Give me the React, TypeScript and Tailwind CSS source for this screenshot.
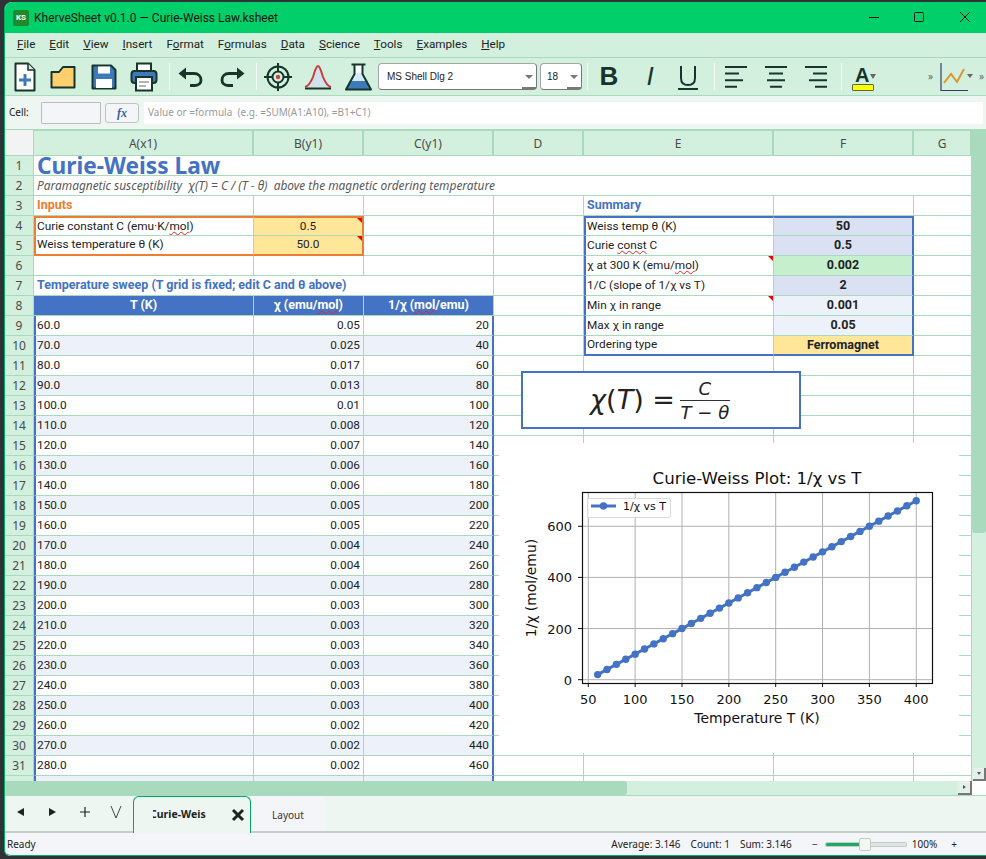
import type { ReactNode } from "react";
import { twMerge } from "tailwind-merge";

const A = "w-[220px]";
const B = "w-[110px]";
const C = "w-[130px]";
const D = "w-[90px]";
const E = "w-[190px]";
const F = "w-[140px]";
const G = "w-[58px]";

const ink = "#16352b";
const blue = "#4472c4";

const chi = [".05", ".025", ".017", ".013", ".01", ".008", ".007", ".006", ".006", ".005", ".005", ".004", ".004", ".004", ".003", ".003", ".003", ".003", ".003", ".003", ".002", ".002", ".002"];

function Cell({ className, children, mark }: { className?: string; children?: ReactNode; mark?: boolean }) {
  return (
    <div
      className={twMerge(
        "relative flex h-full shrink-0 items-center overflow-hidden whitespace-pre border-r border-b border-[#a9dabd] px-[3px] font-['Roboto',sans-serif] text-[11.8px] text-[#222]",
        className
      )}
    >
      <span>{children}</span>
      {mark && <span className="absolute top-0 right-0 h-0 w-0 border-t-[5px] border-l-[5px] border-t-[#f00000] border-l-transparent" />}
    </div>
  );
}

function Row({ n, children }: { n: number | string; children: ReactNode }) {
  return (
    <div className="flex h-[20px] w-[967px]">
      <div className="flex h-full w-[29px] shrink-0 items-center justify-center border-r border-b border-[#a9dabd] bg-[#d3f0df] text-[12px] text-[#4a4a4a]">
        {n}
      </div>
      {children}
    </div>
  );
}

function Wavy({ children }: { children: ReactNode }) {
  return <span className="underline decoration-[#e8202a] decoration-wavy decoration-[1px] underline-offset-[1px]">{children}</span>;
}

function Rest() {
  return (
    <>
      <Cell className={D} />
      <Cell className={E} />
      <Cell className={F} />
      <Cell className={G} />
    </>
  );
}

function SumRow({ n, label, value, fill, mark, left, last }: { n: number; label: ReactNode; value: string; fill: string; mark?: boolean; left: ReactNode; last?: boolean }) {
  return (
    <Row n={n}>
      {left}
      <Cell className={D} />
      <Cell className={twMerge(E, "border-l-2 border-l-[#4472c4] pl-[1px]", n === 4 && "border-t-2 border-t-[#4472c4]", last && "border-b-2 border-b-[#4472c4]")} mark={mark}>
        {label}
      </Cell>
      <Cell className={twMerge(F, fill, "justify-center border-r-2 border-r-[#4472c4] text-[12.5px] font-bold", n === 4 && "border-t-2 border-t-[#4472c4]", last && "border-b-2 border-b-[#4472c4]")}>
        {value}
      </Cell>
      <Cell className={G} />
    </Row>
  );
}

function ToolSep({ className }: { className: string }) {
  return <div className={twMerge("h-[27px] w-[1px] shrink-0 bg-[#f4faf6]", className)} />;
}

function AlignIcon({ className, lines }: { className: string; lines: number[][] }) {
  return (
    <svg viewBox="0 0 22 24" className={twMerge("h-[24px] w-[22px] shrink-0", className)}>
      {lines.map((l, i) => (
        <line key={i} x1={l[0]} x2={l[1]} y1={2 + i * 6.6} y2={2 + i * 6.6} stroke={ink} strokeWidth="2" />
      ))}
    </svg>
  );
}

function Combo({ className, text }: { className: string; text: string }) {
  return (
    <div className={twMerge("relative flex h-[27px] shrink-0 items-center rounded-[4px] border border-[#a5a5a5] border-r-[#777] border-b-[#777] bg-white pl-[8px] font-['Liberation_Sans',sans-serif] text-[10px] text-[#222]", className)}>
      {text}
      <span className="absolute top-[11px] right-[3px] h-0 w-0 border-t-[4px] border-r-[4px] border-l-[4px] border-t-[#777] border-r-transparent border-l-transparent" />
      <span className="absolute right-0 bottom-0 h-[2px] w-[14px] bg-[#777]" />
    </div>
  );
}

function Toolbar() {
  return (
    <div className="flex h-[39px] shrink-0 items-center overflow-hidden border-t border-b border-[#a9dabd] bg-[#d3f0df]">
      <svg viewBox="0 0 22 30" className="ml-[9px] h-[30px] w-[22px] shrink-0">
        <path d="M1.5 1.5 H14 L20.5 8 V28.5 H1.5 Z" fill="#fff" stroke={ink} strokeWidth="2" strokeLinejoin="round" />
        <path d="M14 1.5 V8 H20.5" fill="#dfe9e4" stroke={ink} strokeWidth="1.5" />
        <path d="M11 12 V24 M5 18 H17" stroke="#3f7ab8" strokeWidth="3" />
      </svg>
      <svg viewBox="0 0 26 24" className="ml-[14px] h-[24px] w-[26px] shrink-0">
        <path d="M1.5 7 L9 7 L13 2 H24.5 V22.5 H1.5 Z" fill="#fdcf6e" stroke={ink} strokeWidth="2" strokeLinejoin="round" />
      </svg>
      <svg viewBox="0 0 26 26" className="ml-[15px] h-[26px] w-[26px] shrink-0">
        <path d="M1.5 1.5 H20 L24.5 6 V24.5 H1.5 Z" fill="#3f7ab8" stroke={ink} strokeWidth="2" strokeLinejoin="round" />
        <rect x="7" y="2.5" width="12" height="7" fill="#fff" />
        <rect x="5" y="15" width="16" height="9" fill="#fff" />
      </svg>
      <svg viewBox="0 0 28 30" className="ml-[13px] h-[30px] w-[28px] shrink-0">
        <rect x="7" y="1.5" width="14" height="9" fill="#fff" stroke={ink} strokeWidth="2" />
        <rect x="1.5" y="9" width="25" height="12" rx="3" fill="#3f7ab8" stroke={ink} strokeWidth="2" />
        <rect x="6" y="15" width="16" height="13.5" fill="#fff" stroke={ink} strokeWidth="2" />
        <path d="M9 20 H19 M9 24 H16" stroke="#999" strokeWidth="1.5" />
      </svg>
      <ToolSep className="ml-[11px]" />
      <svg viewBox="0 0 25 20" className="ml-[8px] h-[20px] w-[25px] shrink-0">
        <path d="M2.5 6.5 H16 C20.5 6.5 23 9.5 23 13 C23 16 21 18.5 17 18.5 H12" fill="none" stroke={ink} strokeWidth="2.8" />
        <path d="M0.5 6.5 L8 0.5 V12.5 Z" fill={ink} />
      </svg>
      <svg viewBox="0 0 25 20" className="ml-[17px] h-[20px] w-[25px] shrink-0">
        <path d="M22.5 6.5 H9 C4.5 6.5 2 9.5 2 13 C2 16 4 18.5 8 18.5 H13" fill="none" stroke={ink} strokeWidth="2.8" />
        <path d="M24.5 6.5 L17 0.5 V12.5 Z" fill={ink} />
      </svg>
      <ToolSep className="ml-[11px]" />
      <svg viewBox="0 0 28 28" className="ml-[7px] h-[28px] w-[28px] shrink-0">
        <g fill="none" stroke={ink} strokeWidth="2">
          <circle cx="14" cy="14" r="10.5" />
          <circle cx="14" cy="14" r="5.5" />
          <path d="M14 0 V8 M14 20 V28 M0 14 H8 M20 14 H28" />
        </g>
        <circle cx="14" cy="14" r="2.2" fill="#d63c3c" />
      </svg>
      <svg viewBox="0 0 28 26" className="ml-[12px] h-[26px] w-[28px] shrink-0">
        <path d="M1 23 C5 22 7 18 9 13 C11 7 12 2 14 2 C16 2 17 7 19 13 C21 18 23 22 27 23 Z" fill="#cfe3ee" />
        <path d="M1 23 C5 22 7 18 9 13 C11 7 12 2 14 2 C16 2 17 7 19 13 C21 18 23 22 27 23" fill="none" stroke="#cc3b3b" strokeWidth="2" />
        <path d="M1 24.5 H27" stroke={ink} strokeWidth="2" />
      </svg>
      <svg viewBox="0 0 29 28" className="ml-[12px] h-[28px] w-[29px] shrink-0">
        <path d="M10.5 2 V11 L2 26.5 H27 L18.5 11 V2" fill="#d6e9f8" />
        <path d="M6 18 H23 L27 26.5 H2 Z" fill="#3f7ab8" />
        <rect x="11" y="2" width="7" height="8" fill="#fff" />
        <path d="M7.5 1.5 H21.5 M10.5 1.5 V11 L2 26.5 H27 L18.5 11 V1.5" fill="none" stroke={ink} strokeWidth="2" strokeLinejoin="round" />
      </svg>
      <Combo className="ml-[5px] w-[159px]" text="MS Shell Dlg 2" />
      <Combo className="ml-[3px] w-[42px] pl-[6px]" text="18" />
      <ToolSep className="ml-[5px]" />
      <span className="ml-[8px] flex h-[30px] w-[26px] shrink-0 items-center justify-center font-['Liberation_Sans',sans-serif] text-[26px] font-bold text-[#16352b]">B</span>
      <span className="ml-[15px] flex h-[30px] w-[26px] shrink-0 items-center justify-center font-['Liberation_Sans',sans-serif] text-[26px] text-[#16352b] italic">I</span>
      <svg viewBox="0 0 26 26" className="ml-[12px] h-[26px] w-[26px] shrink-0">
        <path d="M6 2 V14 C6 19 9 21 13 21 C17 21 20 19 20 14 V2" fill="none" stroke={ink} strokeWidth="2" />
        <path d="M3 25 H23" stroke={ink} strokeWidth="2" />
      </svg>
      <ToolSep className="ml-[13px]" />
      <AlignIcon className="ml-[10px]" lines={[[0, 22], [0, 14], [0, 18], [0, 12]]} />
      <AlignIcon className="ml-[18px]" lines={[[0, 22], [4, 18], [2, 20], [5, 17]]} />
      <AlignIcon className="ml-[18px]" lines={[[0, 22], [8, 22], [4, 22], [10, 22]]} />
      <ToolSep className="ml-[14px]" />
      <div className="relative ml-[10px] h-[30px] w-[28px] shrink-0">
        <span className="absolute top-[-2px] left-[3px] font-['Liberation_Sans',sans-serif] text-[20px] font-bold text-[#16352b]">A</span>
        <span className="absolute top-[12px] left-[18px] h-0 w-0 border-t-[5px] border-r-[3px] border-l-[3px] border-t-[#666] border-r-transparent border-l-transparent" />
        <span className="absolute top-[22px] left-0 h-[7px] w-[22px] rounded-[1px] border border-[#5d6b3c] bg-[#ffff00]" />
      </div>
      <span className="ml-[48px] w-[8px] shrink-0 text-[10px] text-[#666]">»</span>
      <svg viewBox="0 0 36 30" className="ml-[4px] h-[30px] w-[36px] shrink-0">
        <path d="M1 1 V28.5 H28" fill="none" stroke="#3a3a66" strokeWidth="1.2" />
        <path d="M4 21 L11 12 L17 20 L24 7" fill="none" stroke="#d9982b" strokeWidth="2" />
        <path d="M27 12 H33 L30 16 Z" fill="#666" />
      </svg>
      <span className="ml-[3px] w-[8px] shrink-0 text-[10px] text-[#666]">»</span>
    </div>
  );
}

function Chart() {
  const px = (v: number) => 588.3 + 0.937 * (v - 50);
  const py = (v: number) => 679.7 - 0.2557 * v;
  const pts = Array.from({ length: 35 }, (_, i) => 60 + i * 10);
  const xt = [50, 100, 150, 200, 250, 300, 350, 400];
  const yt = [0, 200, 400, 600];
  return (
    <svg viewBox="499 443 460 310" className="absolute top-[313px] left-[494px] h-[310px] w-[460px] bg-white font-['DejaVu_Sans',sans-serif]">
      <text x="757" y="484" textAnchor="middle" fontSize="16.6" fill="#111">Curie-Weiss Plot: 1/χ vs T</text>
      {xt.map((v) => (
        <g key={v}>
          <line x1={px(v)} x2={px(v)} y1="492" y2="683" stroke="#b0b0b0" />
          <line x1={px(v)} x2={px(v)} y1="683" y2="687" stroke="#111" />
          <text x={px(v)} y="704" textAnchor="middle" fontSize="13" fill="#111">{v}</text>
        </g>
      ))}
      {yt.map((v) => (
        <g key={v}>
          <line x1="582" x2="932" y1={py(v)} y2={py(v)} stroke="#b0b0b0" />
          <line x1="578" x2="582" y1={py(v)} y2={py(v)} stroke="#111" />
          <text x="572" y={py(v) + 5} textAnchor="end" fontSize="13" fill="#111">{v}</text>
        </g>
      ))}
      <polyline points={pts.map((t) => `${px(t)},${py((t - 50) * 2)}`).join(" ")} fill="none" stroke={blue} strokeWidth="3" />
      {pts.map((t) => (
        <circle key={t} cx={px(t)} cy={py((t - 50) * 2)} r="3.7" fill={blue} />
      ))}
      <rect x="582.5" y="492.5" width="350" height="191" fill="none" stroke="#111" strokeWidth="1.2" />
      <rect x="587.5" y="498.5" width="83" height="19" rx="2" fill="#fff" fillOpacity="0.85" stroke="#d8d8d8" />
      <line x1="591" x2="616" y1="506" y2="506" stroke={blue} strokeWidth="3" />
      <circle cx="603.5" cy="506" r="3.7" fill={blue} />
      <text x="623" y="510" fontSize="11" fill="#111">1/χ vs T</text>
      <text x="757" y="723" textAnchor="middle" fontSize="13.9" fill="#111">Temperature T (K)</text>
      <text x="536" y="588" textAnchor="middle" fontSize="13.9" fill="#111" transform="rotate(-90 536 588)">1/χ (mol/emu)</text>
    </svg>
  );
}

function Formula() {
  return (
    <div className="absolute top-[241px] left-[516px] flex h-[58px] w-[280px] items-center justify-center whitespace-nowrap border-2 border-[#4472c4] bg-white pr-[2px] font-['DejaVu_Sans',sans-serif] text-[#222]">
      <span className="text-[27px]">
        <i>χ</i>(<i>T</i>) =
      </span>
      <span className="ml-[5px] flex w-[50px] flex-col items-center text-[18px] leading-[23px] italic">
        <span className="w-full border-b border-[#333] text-center">C</span>
        <span>T − θ</span>
      </span>
    </div>
  );
}

function Grid() {
  const blankLeft = (
    <>
      <Cell className={A} />
      <Cell className={B} />
      <Cell className={C} />
    </>
  );
  return (
    <div className="relative h-[651px] w-[967px] shrink-0 overflow-hidden bg-white">
      <div className="flex h-[26px] w-[967px]">
        <div className="h-full w-[29px] shrink-0 border-r border-b border-[#a9dabd] bg-[#f1f4f2]" />
        {[["A(x1)", A], ["B(y1)", B], ["C(y1)", C], ["D", D], ["E", E], ["F", F], ["G", G]].map(([t, w]) => (
          <div key={t} className={twMerge(w, "flex h-full shrink-0 items-center justify-center border-t border-r-2 border-b border-[#a9dabd] bg-[#d3f0df] pt-[1px] text-[12px] text-[#4a4a4a]")}>
            {t}
          </div>
        ))}
      </div>

      <Row n={1}>
        <Cell className="w-[938px] pt-[1px] font-['Noto_Sans',sans-serif] text-[22.7px] leading-[20px] font-bold text-[#4472c4]">Curie-Weiss Law</Cell>
      </Row>
      <Row n={2}>
        <Cell className="w-[938px] font-['Noto_Sans',sans-serif] text-[11.9px] text-[#595959] italic">{"Paramagnetic susceptibility  χ(T) = C / (T − θ)  above the magnetic ordering temperature"}</Cell>
      </Row>
      <Row n={3}>
        <Cell className={twMerge(A, "text-[12.5px] font-bold text-[#ed7d31]")}>Inputs</Cell>
        <Cell className={B} />
        <Cell className={C} />
        <Cell className={D} />
        <Cell className={twMerge(E, "text-[12.5px] font-bold text-[#4472c4]")}>Summary</Cell>
        <Cell className={F} />
        <Cell className={G} />
      </Row>
      <SumRow
        n={4}
        label="Weiss temp θ (K)"
        value="50"
        fill="bg-[#dae1f2]"
        left={
          <>
            <Cell className={twMerge(A, "border-t-2 border-l-2 border-t-[#ed7d31] border-l-[#ed7d31] pl-[1px]")}>
              Curie constant C (emu·K/<Wavy>mol</Wavy>)
            </Cell>
            <Cell className={twMerge(B, "justify-center border-t-2 border-r-2 border-t-[#ed7d31] border-r-[#ed7d31] bg-[#ffe699]")} mark>
              0.5
            </Cell>
            <Cell className={C} />
          </>
        }
      />
      <SumRow
        n={5}
        label={
          <>
            Curie <Wavy>const</Wavy> C
          </>
        }
        value="0.5"
        fill="bg-[#dae1f2]"
        left={
          <>
            <Cell className={twMerge(A, "border-b-2 border-l-2 border-b-[#ed7d31] border-l-[#ed7d31] pl-[1px]")}>Weiss temperature θ (K)</Cell>
            <Cell className={twMerge(B, "justify-center border-r-2 border-b-2 border-r-[#ed7d31] border-b-[#ed7d31] bg-[#ffe699]")} mark>
              50.0
            </Cell>
            <Cell className={C} />
          </>
        }
      />
      <SumRow
        n={6}
        label={
          <>
            χ at 300 K (emu/<Wavy>mol</Wavy>)
          </>
        }
        value="0.002"
        fill="bg-[#c6efce]"
        mark
        left={blankLeft}
      />
      <SumRow
        n={7}
        label="1/C (slope of 1/χ vs T)"
        value="2"
        fill="bg-[#dae1f2]"
        left={
          <>
            <Cell className="w-[330px] border-r-0 text-[12.5px] font-bold text-[#4472c4]">Temperature sweep (T grid is fixed; edit C and θ above)</Cell>
            <Cell className={C} />
          </>
        }
      />
      <SumRow
        n={8}
        label="Min χ in range"
        value="0.001"
        fill="bg-[#edf2fa]"
        mark
        left={
          <>
            <Cell className={twMerge(A, "justify-center bg-[#4472c4] text-[12.5px] font-bold text-white")}>T (K)</Cell>
            <Cell className={twMerge(B, "justify-center bg-[#4472c4] text-[12.5px] font-bold text-white")}>
              χ (emu/<Wavy>mol</Wavy>)
            </Cell>
            <Cell className={twMerge(C, "justify-center bg-[#4472c4] text-[12.5px] font-bold text-white")}>
              1/χ (<Wavy>mol</Wavy>/emu)
            </Cell>
          </>
        }
      />
      {chi.map((v, i) => {
        const n = 9 + i;
        const t = 60 + i * 10;
        const shade = n % 2 === 0 ? "bg-[#edf2fa]" : "bg-white";
        const left = (
          <>
            <Cell className={twMerge(A, shade, "border-l-2 border-l-[#4472c4] pl-[1px]")}>{t}.0</Cell>
            <Cell className={twMerge(B, shade, "justify-end")}>{`0${v}`}</Cell>
            <Cell className={twMerge(C, shade, "justify-end border-r-2 border-r-[#4472c4]")}>{(t - 50) * 2}</Cell>
          </>
        );
        if (n === 9) return <SumRow key={n} n={n} label="Max χ in range" value="0.05" fill="bg-[#edf2fa]" left={left} />;
        if (n === 10) return <SumRow key={n} n={n} label="Ordering type" value="Ferromagnet" fill="bg-[#ffe699]" left={left} last />;
        return (
          <Row key={n} n={n}>
            {left}
            <Rest />
          </Row>
        );
      })}
      <Row n="">
        <Cell className={twMerge(A, "border-l-2 border-l-[#4472c4] bg-[#edf2fa]")} />
        <Cell className={twMerge(B, "bg-[#edf2fa]")} />
        <Cell className={twMerge(C, "border-r-2 border-r-[#4472c4] bg-[#edf2fa]")} />
        <Rest />
      </Row>

      <Formula />
      <Chart />
    </div>
  );
}

function VScroll() {
  return (
    <div className="relative flex h-[651px] w-[14px] shrink-0 flex-col bg-[#d3f0df]">
      <div className="h-[403px] rounded-b-[3px] bg-[#a9dabd]" />
      <div className="absolute right-0 bottom-0 flex h-[13px] w-[13px] items-center justify-center border-r-2 border-b-2 border-[#777] bg-[#e4f0ea]">
        <span className="h-0 w-0 border-t-[3px] border-r-[2.5px] border-l-[2.5px] border-t-[#555] border-r-transparent border-l-transparent" />
      </div>
    </div>
  );
}

function HScroll() {
  return (
    <div className="flex h-[15px] shrink-0 border-b border-[#a9dabd]">
      <div className="relative h-full w-[967px] shrink-0 bg-[#d3f0df]">
        <div className="h-full w-[622px] rounded-r-[3px] bg-[#a9dabd]" />
        <div className="absolute top-0 right-0 flex h-[14px] w-[14px] items-center justify-center border-r-2 border-b-2 border-[#777] bg-[#e4f0ea]">
          <span className="h-0 w-0 border-t-[2.5px] border-b-[2.5px] border-l-[3px] border-t-transparent border-b-transparent border-l-[#555]" />
        </div>
      </div>
      <div className="h-full flex-1 bg-white" />
    </div>
  );
}

function Tabs() {
  return (
    <div className="flex h-[37px] shrink-0 items-stretch border-b-2 border-[#c3cec8] bg-[#edf6f1]">
      <div className="relative w-[128px] shrink-0 text-[#222]">
        <span className="absolute top-[12px] left-[12px] h-0 w-0 border-t-[4px] border-r-[7px] border-b-[4px] border-t-transparent border-r-[#222] border-b-transparent" />
        <span className="absolute top-[12px] left-[44px] h-0 w-0 border-t-[4px] border-b-[4px] border-l-[7px] border-t-transparent border-b-transparent border-l-[#222]" />
        <svg viewBox="0 0 12 12" className="absolute top-[10px] left-[74px] h-[12px] w-[12px]">
          <path d="M6 1 V11 M1 6 H11" stroke="#222" strokeWidth="1.2" />
        </svg>
        <svg viewBox="0 0 12 14" className="absolute top-[9px] left-[105px] h-[14px] w-[12px]">
          <path d="M1 1 L6 13 L11 1" fill="none" stroke="#333" strokeWidth="0.9" />
        </svg>
      </div>
      <div className="relative z-10 mb-[-2px] flex w-[118px] shrink-0 items-center rounded-t-[6px] border border-b-0 border-[#00a862] bg-[#edf6f1]">
        <div className="ml-[19px] w-[53px] overflow-hidden text-[10.5px] font-bold whitespace-nowrap text-[#222]">
          <span className="ml-[-3px] block">Curie-Weiss Law</span>
        </div>
        <svg viewBox="0 0 14 14" className="ml-[25px] h-[14px] w-[14px]">
          <path d="M2 2 L12 12 M12 2 L2 12" stroke="#222" strokeWidth="3" />
        </svg>
      </div>
      <div className="flex w-[74px] shrink-0 items-center justify-center bg-[#f4f5f8] pt-[3px] text-[10px] text-[#333]">Layout</div>
    </div>
  );
}

function StatusBar() {
  return (
    <div className="relative flex h-[23px] shrink-0 items-center rounded-bl-[6px] border-b border-[#00b060] bg-[#f4f5f8] pr-[29px] pl-[2px] text-[10px] text-[#222]">
      <span>Ready</span>
      <span className="ml-auto">Average: 3.146</span>
      <span className="ml-[10px]">Count: 1</span>
      <span className="ml-[10px]">Sum: 3.146</span>
      <span className="ml-[19px] w-[8px] text-center">−</span>
      <div className="relative ml-[6px] h-[5px] w-[82px] rounded-[2px] border border-[#c2cbc6] bg-[#dfe5e1]">
        <div className="h-full w-[35px] rounded-[2px] bg-[#1fa866]" />
        <div className="absolute top-[-5px] left-[33px] h-[13px] w-[12px] rounded-[2px] border border-[#c2cbc6] bg-[#f2f7f4]" />
      </div>
      <span className="ml-[5px]">100%</span>
      <span className="ml-[14px]">+</span>
    </div>
  );
}

export default function App() {
  return (
    <div className="flex h-[859px] w-[986px] flex-col overflow-hidden bg-[#2f3338] pt-[2px] pb-[3px] pl-[4px] font-['Noto_Sans',sans-serif]">
      <div className="flex flex-1 flex-col overflow-hidden rounded-tl-[8px] rounded-bl-[6px] border-l border-[#00b060] bg-[#edf6f1]">
        <div className="relative flex h-[31px] shrink-0 items-center bg-[#00cf6a] pl-[8px] font-['Roboto',sans-serif] text-[12px] text-[#111]">
          <div className="flex h-[16px] w-[16px] items-center justify-center rounded-[2px] bg-[#1f8a2d] text-[8px] font-bold text-white">KS</div>
          <span className="ml-[5px]">KherveSheet v0.1.0 — Curie-Weiss Law.ksheet</span>
          <svg viewBox="0 0 101 16" className="absolute top-[7px] right-[16px] h-[16px] w-[101px]">
            <path d="M0 8.5 H10" stroke="#111" />
            <rect x="45.5" y="3.5" width="9" height="9" rx="1" fill="none" stroke="#111" />
            <path d="M91 3 L101 13 M101 3 L91 13" stroke="#111" />
          </svg>
        </div>
        <div className="flex h-[24px] shrink-0 items-center gap-[14px] bg-[#d3f0df] pl-[12px] font-['Roboto',sans-serif] text-[11.7px] text-[#222]">
          <span><u>F</u>ile</span>
          <span><u>E</u>dit</span>
          <span><u>V</u>iew</span>
          <span><u>I</u>nsert</span>
          <span>F<u>o</u>rmat</span>
          <span>F<u>o</u>rmulas</span>
          <span><u>D</u>ata</span>
          <span><u>S</u>cience</span>
          <span><u>T</u>ools</span>
          <span><u>E</u>xamples</span>
          <span><u>H</u>elp</span>
        </div>
        <Toolbar />
        <div className="flex h-[34px] shrink-0 items-center border-b border-[#a9dabd] bg-[#edf6f1] text-[10px]">
          <span className="ml-[4px] w-[32px] text-[#222]">Cell:</span>
          <div className="h-[22px] w-[60px] rounded-[1px] border border-[#bcbcbc] bg-[#f4f5f8]" />
          <div className="ml-[4px] flex h-[20px] w-[34px] items-center justify-center rounded-[3px] border border-[#bcc5c0] bg-[#f4f5f8] font-['Liberation_Serif',serif] text-[12px] font-bold text-[#3a5f9e] italic">fx</div>
          <div className="ml-[5px] flex h-[22px] w-[839px] items-center bg-white pl-[4px] whitespace-pre text-[#9a9a9a]">Value or =formula  (e.g. =SUM(A1:A10), =B1+C1)</div>
        </div>
        <div className="flex shrink-0">
          <Grid />
          <VScroll />
        </div>
        <HScroll />
        <Tabs />
        <StatusBar />
      </div>
    </div>
  );
}
